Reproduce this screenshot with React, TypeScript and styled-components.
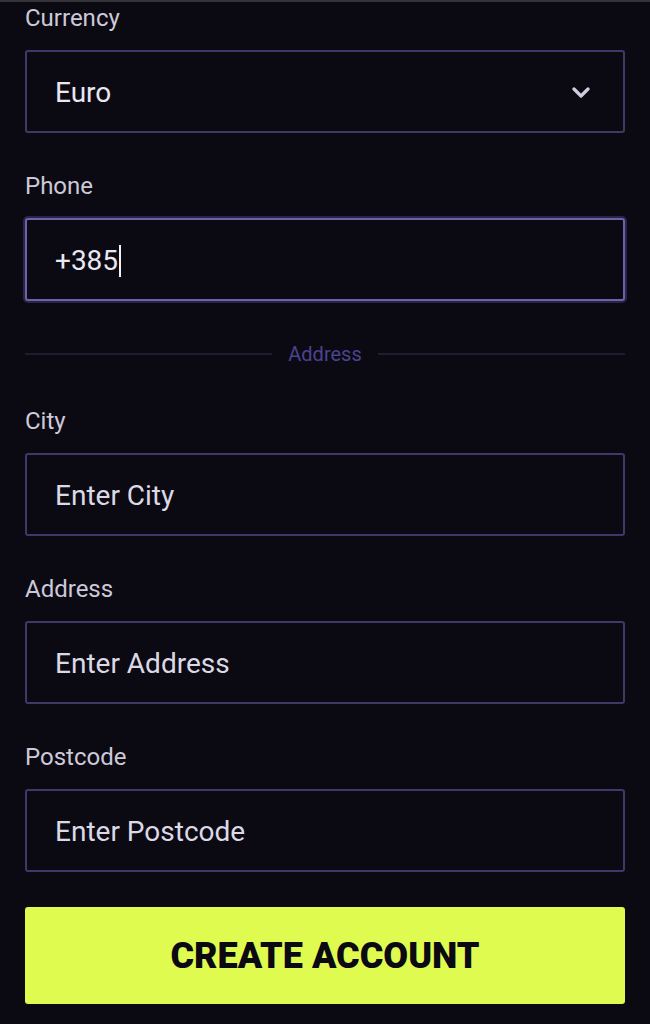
import styled, { createGlobalStyle } from "styled-components";

const GlobalStyle = createGlobalStyle`
  html, body {
    margin: 0;
    padding: 0;
    background: #0b0a12;
  }
  body {
    font-family: Roboto, "Liberation Sans", sans-serif;
  }
  * {
    box-sizing: border-box;
  }
`;

function App() {
  return (
    <>
      <GlobalStyle />
      <Page>
        <Form>
          <Field>
            <Label>Currency</Label>
            <SelectBox>
              <FieldText>Euro</FieldText>
              <Chevron viewBox="0 0 20 12" aria-hidden>
                <polyline points="3,2 10,9 17,2" />
              </Chevron>
            </SelectBox>
          </Field>
          <Field>
            <Label>Phone</Label>
            <InputBox $focused>
              <FieldText>+385</FieldText>
              <Caret />
            </InputBox>
          </Field>
          <Divider>
            <DividerText>Address</DividerText>
          </Divider>
          <Field>
            <Label>City</Label>
            <TextInput placeholder="Enter City" />
          </Field>
          <Field>
            <Label>Address</Label>
            <TextInput placeholder="Enter Address" />
          </Field>
          <Field>
            <Label>Postcode</Label>
            <TextInput placeholder="Enter Postcode" />
          </Field>
          <SubmitButton type="button">CREATE ACCOUNT</SubmitButton>
        </Form>
      </Page>
    </>
  );
}

export default App;

const Page = styled.div`
  min-height: 1024px;
  border-top: 2px solid #34333a;
  padding: 2px 25px 20px 25px;
  background: #0b0a12;
`;

const Form = styled.div`
  display: flex;
  flex-direction: column;
  gap: 39px;
`;

const Field = styled.div`
  display: flex;
  flex-direction: column;
  gap: 18px;
`;

const Label = styled.label`
  font-size: 24px;
  line-height: 28px;
  color: #cdc9da;
`;

const boxStyles = `
  height: 83px;
  width: 100%;
  border: 2px solid #3f3967;
  border-radius: 3px;
  background: #0b0a12;
  padding: 2px 29px 0 28px;
  display: flex;
  align-items: center;
`;

const SelectBox = styled.div`
  ${boxStyles}
  justify-content: space-between;
  padding-right: 32px;
`;

const InputBox = styled.div<{ $focused?: boolean }>`
  ${boxStyles}
  border-color: ${(p) => (p.$focused ? "#6a63a8" : "#3f3967")};
  box-shadow: ${(p) => (p.$focused ? "0 0 0 2px rgba(80, 70, 140, 0.45)" : "none")};
`;

const FieldText = styled.span`
  font-size: 28px;
  color: #e9e7f1;
`;

const Caret = styled.span`
  display: inline-block;
  width: 2px;
  height: 32px;
  margin-left: 1px;
  background: #f2f1f7;
`;

const Chevron = styled.svg`
  width: 20px;
  height: 12px;
  fill: none;
  stroke: #cfcbe0;
  stroke-width: 3.2;
  stroke-linecap: round;
  stroke-linejoin: round;
`;

const TextInput = styled.input`
  ${boxStyles}
  font-family: Roboto, "Liberation Sans", sans-serif;
  font-size: 28px;
  color: #e9e7f1;
  outline: none;

  &::placeholder {
    color: #dcd9e6;
    opacity: 1;
  }
`;

const Divider = styled.div`
  display: flex;
  align-items: center;
  gap: 16px;
  height: 28px;

  &::before,
  &::after {
    content: "";
    flex: 1;
    height: 2px;
    background: #1f1c30;
  }
`;

const DividerText = styled.span`
  font-size: 20px;
  color: #4a4390;
`;

const SubmitButton = styled.button`
  margin-top: -4px;
  height: 97px;
  width: 100%;
  border: none;
  border-radius: 3px;
  background: #e0fb50;
  color: #0b0a12;
  font-family: Roboto, "Liberation Sans", sans-serif;
  font-weight: 900;
  font-size: 36px;
  cursor: pointer;
`;
